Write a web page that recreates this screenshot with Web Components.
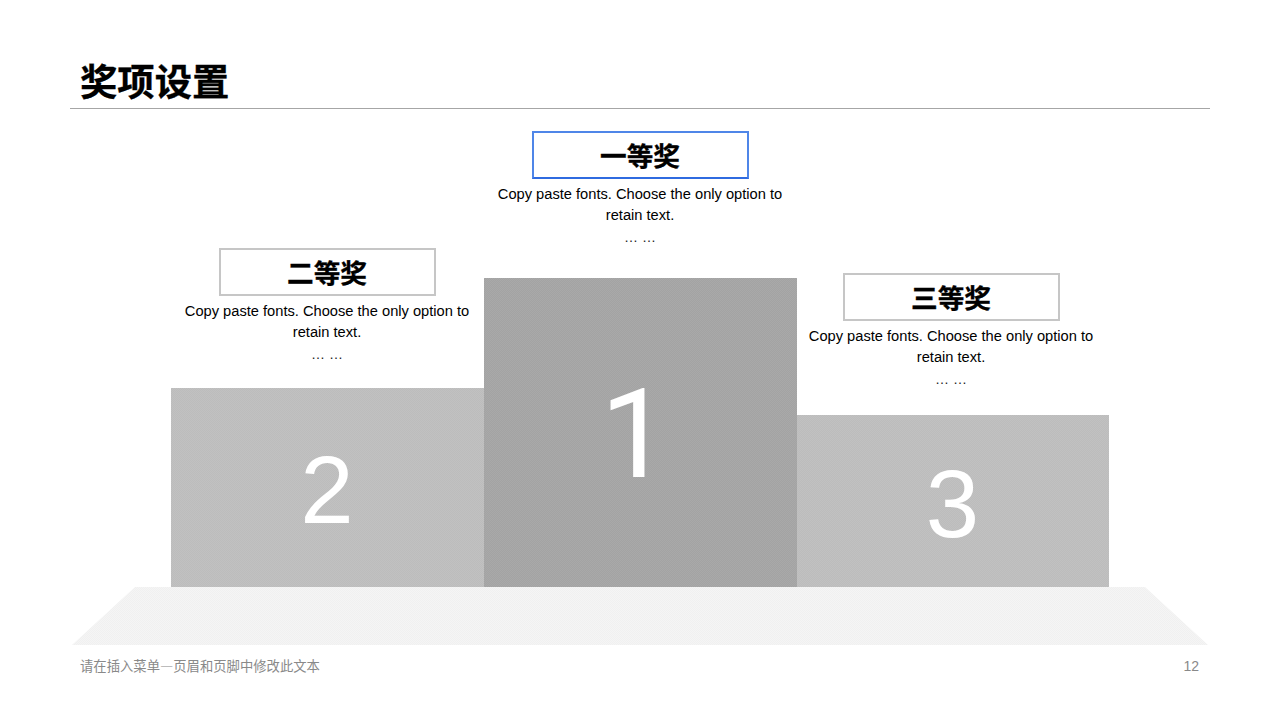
<!DOCTYPE html>
<html lang="zh">
<head>
<meta charset="utf-8">
<title>奖项设置</title>
<style>
  html, body { margin: 0; height: 100%; background: #fff; }
  body { font-family: "Liberation Sans", "Noto Sans CJK SC", sans-serif; }
</style>
</head>
<body>
<slide-page>
  <slide-header slot="header">奖项设置</slide-header>
  <podium-column place="2" gap="22" width="313" tone="light" bar="199" digit="96">二等奖</podium-column>
  <podium-column place="1" gap="29" width="313" tone="dark" bar="309" digit="124" digit-font="Roboto" digit-inset="10" accent>一等奖</podium-column>
  <podium-column place="3" gap="24" width="312" tone="light" bar="172" digit="96" shift="3">三等奖</podium-column>
  <slide-footer slot="footer" page="12">请在插入菜单—页眉和页脚中修改此文本</slide-footer>
</slide-page>

<script>
class SlidePage extends HTMLElement {
  constructor() {
    super();
    this.attachShadow({ mode: 'open' });
  }

  connectedCallback() {
    this.shadowRoot.innerHTML = `
    <style>
    :host {
      display: flex;
      flex-direction: column;
      width: 1280px;
      height: 720px;
      overflow: hidden;
    }
    .podium {
      display: flex;
      align-items: flex-end;
      justify-content: center;
      height: 478px;
      padding-right: 1px;
      box-sizing: border-box;
    }
    .floor {
      height: 58px;
      margin: 0 70px;
      background: repeating-conic-gradient(#f0f0f0 0 25%, #f5f5f5 0 50%) 0 0 / 2px 2px;
      clip-path: polygon(65px 0, 1075px 0, 1138px 100%, 2px 100%);
    }
    </style>
    <slot name="header"></slot>
    <div class="podium"><slot></slot></div>
    <div class="floor"></div>
    <slot name="footer"></slot>
    `;
  }
}

class SlideHeader extends HTMLElement {
  constructor() {
    super();
    this.attachShadow({ mode: 'open' });
  }

  connectedCallback() {
    this.shadowRoot.innerHTML = `
    <style>
    :host {
      display: block;
      height: 109px;
      margin: 0 70px;
      box-sizing: border-box;
      border-bottom: 1px solid #a6a6a6;
    }
    h1 {
      margin: 0;
      padding: 57px 0 0 10px;
      font: 700 37.33px/46px "Noto Sans CJK SC", sans-serif;
      color: #000;
      -webkit-text-stroke: 0.3px #000;
    }
    </style>
    <h1><slot></slot></h1>
    `;
  }
}

class PodiumColumn extends HTMLElement {
  constructor() {
    super();
    this.attachShadow({ mode: 'open' });
  }

  connectedCallback() {
    const accent = this.hasAttribute('accent');
    const shades = this.getAttribute('tone') === 'dark' ? ['#a3a3a3', '#a9a9a9'] : ['#bcbcbc', '#c1c1c1'];
    const shift = this.getAttribute('shift') || 0;
    const digitFont = this.getAttribute('digit-font') || 'Liberation Sans';
    const digitInset = this.getAttribute('digit-inset') || 0;
    this.shadowRoot.innerHTML = `
    <style>
    :host {
      display: flex;
      flex-direction: column;
      align-items: center;
      width: ${this.getAttribute('width')}px;
    }
    .head {
      display: flex;
      flex-direction: column;
      align-items: center;
      margin-right: ${shift}px;
    }
    .label {
      width: 217px;
      height: 48px;
      box-sizing: border-box;
      border: 2px solid ${accent ? '#4f86e8' : '#c6c6c6'};
      ${accent ? 'border-bottom-color: #2f6be0;' : ''}
      display: flex;
      align-items: center;
      justify-content: center;
      font: 700 26.67px/1 "Noto Sans CJK SC", sans-serif;
      color: #000;
      -webkit-text-stroke: 0.3px #000;
    }
    .note {
      width: 300px;
      margin-top: 5px;
      font: 14.67px/21px "Liberation Sans", sans-serif;
      text-align: center;
      color: #000;
    }
    .dots { font-size: 14px; line-height: 23px; color: #222; }
    .bar {
      width: 100%;
      height: ${this.getAttribute('bar')}px;
      margin-top: ${this.getAttribute('gap')}px;
      background: repeating-conic-gradient(${shades[0]} 0 25%, ${shades[1]} 0 50%) 0 0 / 2px 2px;
      display: flex;
      align-items: center;
      justify-content: center;
      box-sizing: border-box;
      padding: 5px ${digitInset}px 0 0;
      font: ${this.getAttribute('digit')}px/1 "${digitFont}", sans-serif;
      color: #fff;
    }
    </style>
    <div class="head">
      <div class="label"><slot></slot></div>
      <div class="note">Copy paste fonts. Choose the only option to retain text.<div class="dots">… …</div></div>
    </div>
    <div class="bar">${this.getAttribute('place')}</div>
    `;
  }
}

class SlideFooter extends HTMLElement {
  constructor() {
    super();
    this.attachShadow({ mode: 'open' });
  }

  connectedCallback() {
    this.shadowRoot.innerHTML = `
    <style>
    :host {
      display: flex;
      justify-content: space-between;
      align-items: center;
      margin: 10px 81px 0 80px;
      height: 22px;
      font: 13.33px/22px "Noto Sans CJK SC", sans-serif;
      color: #898989;
    }
    .num { font: 14px/22px "Liberation Sans", sans-serif; }
    </style>
    <span><slot></slot></span>
    <span class="num">${this.getAttribute('page')}</span>
    `;
  }
}

customElements.define('slide-page', SlidePage);
customElements.define('slide-header', SlideHeader);
customElements.define('podium-column', PodiumColumn);
customElements.define('slide-footer', SlideFooter);
</script>
</body>
</html>
